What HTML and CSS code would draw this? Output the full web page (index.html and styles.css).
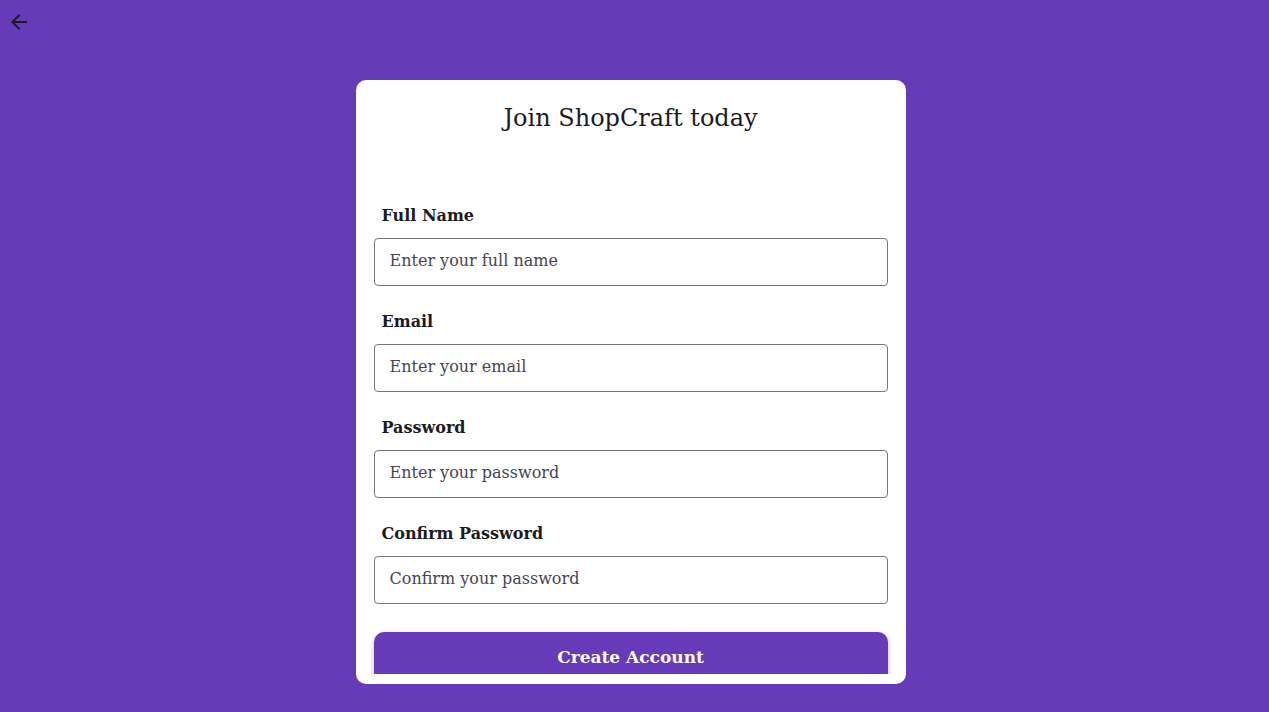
FILE: index.html
```html
<!DOCTYPE html>
<html lang="en">
<head>
<meta charset="utf-8">
<meta name="viewport" content="width=device-width, initial-scale=1">
<title>Join ShopCraft</title>
<link rel="stylesheet" href="styles.css">
</head>
<body>
<header class="topbar">
  <button class="back" type="button" aria-label="Back">
    <svg viewBox="0 0 24 24" width="24" height="24" aria-hidden="true"><path fill="currentColor" d="M20 11H7.83l5.59-5.59L12 4l-8 8 8 8 1.41-1.41L7.83 13H20v-2z"/></svg>
  </button>
</header>
<main class="page">
  <section class="card">
    <form class="form">
      <h1 class="title">Join ShopCraft today</h1>
      <div class="field">
        <label class="label" for="name">Full Name</label>
        <input class="input" id="name" type="text" placeholder="Enter your full name">
      </div>
      <div class="field">
        <label class="label" for="email">Email</label>
        <input class="input" id="email" type="email" placeholder="Enter your email">
      </div>
      <div class="field">
        <label class="label" for="password">Password</label>
        <input class="input" id="password" type="password" placeholder="Enter your password">
      </div>
      <div class="field">
        <label class="label" for="confirm">Confirm Password</label>
        <input class="input" id="confirm" type="password" placeholder="Confirm your password">
      </div>
      <button class="submit" type="submit">Create Account</button>
    </form>
  </section>
</main>
</body>
</html>
```
FILE: styles.css
```css
* {
  box-sizing: border-box;
}

body {
  display: flex;
  flex-direction: column;
  height: 100vh;
  margin: 0;
  background: #673ab7;
  color: #1c1b1f;
  font-family: "DejaVu Serif", serif;
}

.topbar {
  display: flex;
  padding: 10px 7px;
}

.back {
  display: flex;
  padding: 0;
  border: 0;
  background: none;
  color: #1c1b1f;
}

.page {
  display: flex;
  flex: 1;
  justify-content: center;
  min-height: 0;
  padding: 36px 16px 28px 8px;
}

.card {
  display: flex;
  width: 100%;
  max-width: 550px;
  padding: 10px;
  border-radius: 10px;
  background: #fff;
}

.form {
  flex: 1;
  min-width: 0;
  padding: 8px;
  overflow-y: auto;
  scrollbar-width: none;
}

.title {
  margin: 0 0 56px;
  font-size: 24px;
  font-weight: 400;
  line-height: 40px;
  text-align: center;
}

.field {
  display: flex;
  flex-direction: column;
  margin-bottom: 14px;
}

.label {
  padding: 8px;
  font-size: 16px;
  font-weight: 700;
  line-height: 28px;
}

.input {
  height: 48px;
  padding: 0 15px 4px;
  border: 1px solid #79747e;
  border-radius: 4px;
  background: #fff;
  color: #1c1b1f;
  font: inherit;
  font-size: 16px;
}

.input::placeholder {
  color: #49454f;
  opacity: 1;
}

.submit {
  width: 100%;
  height: 50px;
  margin-top: 14px;
  border: 0;
  border-radius: 10px;
  background: #673ab7;
  box-shadow: 0 2px 5px rgba(0, 0, 0, 0.3);
  color: #fff;
  font: inherit;
  font-size: 17px;
  font-weight: 700;
}
```
